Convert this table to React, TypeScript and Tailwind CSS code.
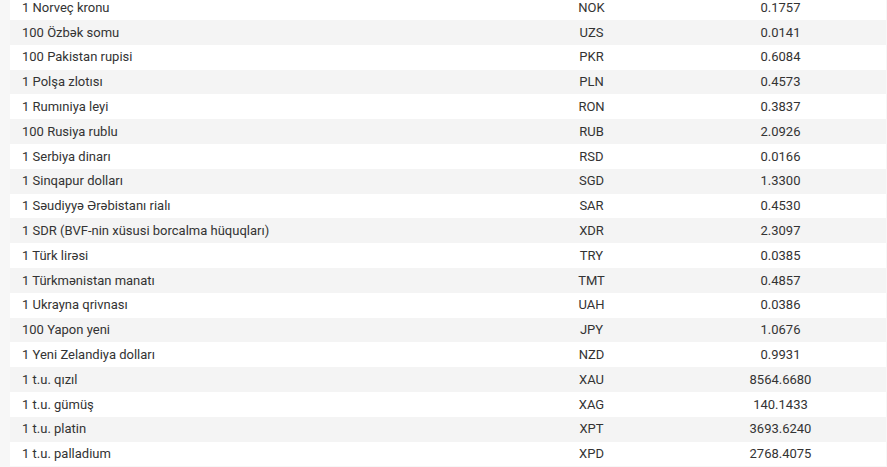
import React from 'react';

interface Rate {
  name: string;
  code: string;
  value: string;
}

const rates: Rate[] = [
  { name: '1 Norveç kronu', code: 'NOK', value: '0.1757' },
  { name: '100 Özbək somu', code: 'UZS', value: '0.0141' },
  { name: '100 Pakistan rupisi', code: 'PKR', value: '0.6084' },
  { name: '1 Polşa zlotısı', code: 'PLN', value: '0.4573' },
  { name: '1 Rumıniya leyi', code: 'RON', value: '0.3837' },
  { name: '100 Rusiya rublu', code: 'RUB', value: '2.0926' },
  { name: '1 Serbiya dinarı', code: 'RSD', value: '0.0166' },
  { name: '1 Sinqapur dolları', code: 'SGD', value: '1.3300' },
  { name: '1 Səudiyyə Ərəbistanı rialı', code: 'SAR', value: '0.4530' },
  { name: '1 SDR (BVF-nin xüsusi borcalma hüquqları)', code: 'XDR', value: '2.3097' },
  { name: '1 Türk lirəsi', code: 'TRY', value: '0.0385' },
  { name: '1 Türkmənistan manatı', code: 'TMT', value: '0.4857' },
  { name: '1 Ukrayna qrivnası', code: 'UAH', value: '0.0386' },
  { name: '100 Yapon yeni', code: 'JPY', value: '1.0676' },
  { name: '1 Yeni Zelandiya dolları', code: 'NZD', value: '0.9931' },
  { name: '1 t.u. qızıl', code: 'XAU', value: '8564.6680' },
  { name: '1 t.u. gümüş', code: 'XAG', value: '140.1433' },
  { name: '1 t.u. platin', code: 'XPT', value: '3693.6240' },
  { name: '1 t.u. palladium', code: 'XPD', value: '2768.4075' },
];

const App = () => {
  return (
    <div className="h-[467px] overflow-hidden bg-[#f7f7f7] pl-[10px] pr-px font-['Roboto',sans-serif] text-[13px] text-[#333]">
      <div className="-mt-[4.8px] bg-white">
        {rates.map((r, i) => (
          <div
            key={r.code}
            className={`flex h-[24.8px] items-center ${i % 2 === 1 ? 'bg-[#f4f4f4]' : 'bg-white'}`}
          >
            <div className="w-[498px] pl-3">{r.name}</div>
            <div className="w-[167px] text-center">{r.code}</div>
            <div className="flex-1 text-center">{r.value}</div>
          </div>
        ))}
      </div>
    </div>
  );
};

export default App;
